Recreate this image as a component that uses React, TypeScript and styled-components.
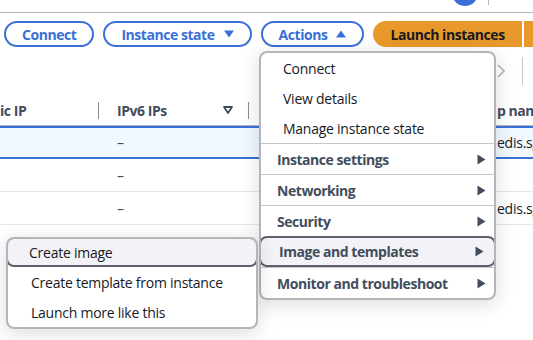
import React from 'react'
import styled, { createGlobalStyle } from 'styled-components'

const GlobalStyle = createGlobalStyle`
  body {
    margin: 0;
    font-family: "Open Sans", "Noto Sans", sans-serif;
    letter-spacing: -0.25px;
    background: #fff;
    overflow: hidden;
  }
`

const Page = styled.div`
  position: relative;
  width: 533px;
  height: 340px;
  overflow: hidden;
  background: #fff;
`

const TopBar = styled.div`
  height: 12px;
  border-bottom: 1px solid #b6b6b8;
  display: flex;
  justify-content: flex-end;
  align-items: flex-end;
  padding-right: 44px;
  gap: 10px;
  overflow: hidden;
`

const Avatar = styled.div`
  width: 26px;
  height: 26px;
  border-radius: 50%;
  background: #3b6fd8;
  margin-bottom: 6px;
  flex-shrink: 0;
`

const TopDivider = styled.div`
  width: 1px;
  height: 5px;
  background: #b6b6b8;
  align-self: flex-start;
`

const Toolbar = styled.div`
  display: flex;
  align-items: center;
  gap: 9px;
  padding: 8px 0 0 4px;
  white-space: nowrap;
`

const OutlineButton = styled.button`
  height: 26px;
  box-sizing: border-box;
  border: 2px solid #3b6fd8;
  border-radius: 13px;
  background: #fff;
  color: #3b6fd8;
  font-family: inherit;
  font-weight: 700;
  font-size: 14px;
  letter-spacing: -0.45px;
  padding: 0 16px;
  display: flex;
  align-items: center;
  gap: 9px;
`

const SplitButton = styled.div`
  display: flex;
  gap: 2px;
`

const PrimaryButton = styled.button<{ $tail?: boolean }>`
  height: 26px;
  border: none;
  background: #e9992b;
  color: #16191f;
  font-family: inherit;
  font-weight: 700;
  font-size: 14px;
  letter-spacing: -0.45px;
  padding: ${p => (p.$tail ? '0 20px' : '0 17px')};
  border-radius: ${p => (p.$tail ? '0' : '13px 0 0 13px')};
`

const PagerRow = styled.div`
  height: 48px;
  display: flex;
  justify-content: flex-end;
  align-items: center;
  gap: 17px;
  padding-right: 10px;
`

const PagerLine = styled.div`
  width: 1px;
  height: 28px;
  background: #c6c6cd;
`

const Table = styled.div`
  display: grid;
  grid-template-columns: 99px 150px 231px 1fr;
`

const HeadCell = styled.div<{ $pad?: number }>`
  height: 30px;
  border-bottom: 1px solid #b6b6bd;
  display: flex;
  align-items: center;
  padding-left: ${p => p.$pad ?? 0}px;
  font-weight: 700;
  font-size: 14px;
  letter-spacing: -0.45px;
  color: #414d5c;
  white-space: nowrap;
  overflow: hidden;
`

const HeadLabel = styled.span`
  flex: 1;
`

const HeadSep = styled.span`
  width: 2px;
  height: 17px;
  background: #8c8c94;
  margin-right: -1px;
  flex-shrink: 0;
`

const FilterIcon = styled.svg`
  margin-right: 15px;
`

const Cell = styled.div<{ $selected?: boolean; $pad?: number }>`
  height: ${p => (p.$selected ? '29px' : '32px')};
  display: flex;
  align-items: center;
  padding-left: ${p => p.$pad ?? 0}px;
  font-size: 14px;
  color: #16191f;
  white-space: nowrap;
  overflow: hidden;
  background: ${p => (p.$selected ? '#f1f8fe' : '#fff')};
  border-top: ${p => (p.$selected ? '2px solid #3b6fd8' : 'none')};
  border-bottom: ${p => (p.$selected ? '2px solid #3b6fd8' : '1px solid #e6e6ea')};
`

const Dash = styled.span`
  color: #414d5c;
`

const Menu = styled.div<{ $left: number; $top: number; $width: number }>`
  position: absolute;
  left: ${p => p.$left}px;
  top: ${p => p.$top}px;
  width: ${p => p.$width}px;
  box-sizing: border-box;
  background: #fff;
  border: 2px solid #b4b4bb;
  border-radius: 8px;
  box-shadow: 0 4px 20px rgba(0, 7, 22, 0.14);
  overflow: hidden;
`

const Item = styled.div<{ $active?: boolean; $pad?: number }>`
  height: 30px;
  box-sizing: border-box;
  display: flex;
  align-items: center;
  padding-left: ${p => p.$pad ?? 20}px;
  font-size: 14px;
  color: #16191f;
  white-space: nowrap;
  background: ${p => (p.$active ? '#f3f3f7' : 'transparent')};
  border: 2px solid ${p => (p.$active ? '#5f5f69' : 'transparent')};
  border-radius: ${p => (p.$active ? '8px' : '0')};
  margin: ${p => (p.$active ? '-2px -2px 0' : '0')};
`

const Category = styled.div<{ $active?: boolean }>`
  height: 31px;
  box-sizing: border-box;
  display: flex;
  align-items: center;
  justify-content: space-between;
  padding: 0 8px 0 16px;
  font-size: 14px;
  font-weight: 700;
  letter-spacing: -0.45px;
  color: #414d5c;
  white-space: nowrap;
  border-top: 1px solid #c6c6cd;
  ${p =>
    p.$active &&
    `
    background: #f3f3f7;
    border: 2px solid #5f5f69;
    border-radius: 8px;
    margin: 0 -2px;
    padding: 0 10px 0 18px;
  `}
`

const Arrow = () => (
  <svg width="9" height="11" viewBox="0 0 9 11">
    <path d="M0.5 0.5 L8.5 5.5 L0.5 10.5 Z" fill="#414d5c" />
  </svg>
)

const Caret = ({ up }: { up?: boolean }) => (
  <svg width="10" height="8" viewBox="0 0 10 8">
    <path d={up ? 'M0 7.5 L5 0.5 L10 7.5 Z' : 'M0 0.5 L10 0.5 L5 7.5 Z'} fill="#3b6fd8" />
  </svg>
)

const categories = [
  'Instance settings',
  'Networking',
  'Security',
  'Image and templates',
  'Monitor and troubleshoot',
]

const rows = [{ sel: true, name: 'edis.sg' }, { sel: false, name: '' }, { sel: false, name: 'edis.sg' }]

export default function App() {
  return (
    <Page>
      <GlobalStyle />
      <TopBar>
        <Avatar />
        <TopDivider />
      </TopBar>
      <Toolbar>
        <OutlineButton>Connect</OutlineButton>
        <OutlineButton>
          Instance state <Caret />
        </OutlineButton>
        <OutlineButton>
          Actions <Caret up />
        </OutlineButton>
        <SplitButton>
          <PrimaryButton>Launch instances</PrimaryButton>
          <PrimaryButton $tail />
        </SplitButton>
      </Toolbar>
      <PagerRow>
        <svg width="8" height="14" viewBox="0 0 8 14">
          <path d="M1 1 L7 7 L1 13" fill="none" stroke="#b4b4bb" strokeWidth="1.6" />
        </svg>
        <PagerLine />
      </PagerRow>
      <Table>
        <HeadCell>
          <HeadLabel>ic IP</HeadLabel>
          <HeadSep />
        </HeadCell>
        <HeadCell $pad={18}>
          <HeadLabel>IPv6 IPs</HeadLabel>
          <FilterIcon width="10" height="8" viewBox="0 0 10 8">
            <path d="M1 1 L9 1 L5 7 Z" fill="none" stroke="#414d5c" strokeWidth="1.8" strokeLinejoin="round" />
          </FilterIcon>
          <HeadSep />
        </HeadCell>
        <HeadCell $pad={18}>
          <HeadLabel />
          <HeadSep />
        </HeadCell>
        <HeadCell $pad={17}>
          <HeadLabel>p name</HeadLabel>
        </HeadCell>
        {rows.map((r, i) => (
          <React.Fragment key={i}>
            <Cell $selected={r.sel} />
            <Cell $selected={r.sel} $pad={18}>
              <Dash>–</Dash>
            </Cell>
            <Cell $selected={r.sel} />
            <Cell $selected={r.sel} $pad={17}>
              {r.name}
            </Cell>
          </React.Fragment>
        ))}
      </Table>

      <Menu $left={259} $top={51} $width={237}>
        <Item $pad={20}>Connect</Item>
        <Item $pad={20}>View details</Item>
        <Item $pad={20}>Manage instance state</Item>
        {categories.map(c => (
          <Category key={c} $active={c === 'Image and templates'}>
            {c}
            <Arrow />
          </Category>
        ))}
      </Menu>

      <Menu $left={6} $top={237} $width={252}>
        <Item $active $pad={21}>Create image</Item>
        <Item $pad={21}>Create template from instance</Item>
        <Item $pad={21}>Launch more like this</Item>
      </Menu>
    </Page>
  )
}
